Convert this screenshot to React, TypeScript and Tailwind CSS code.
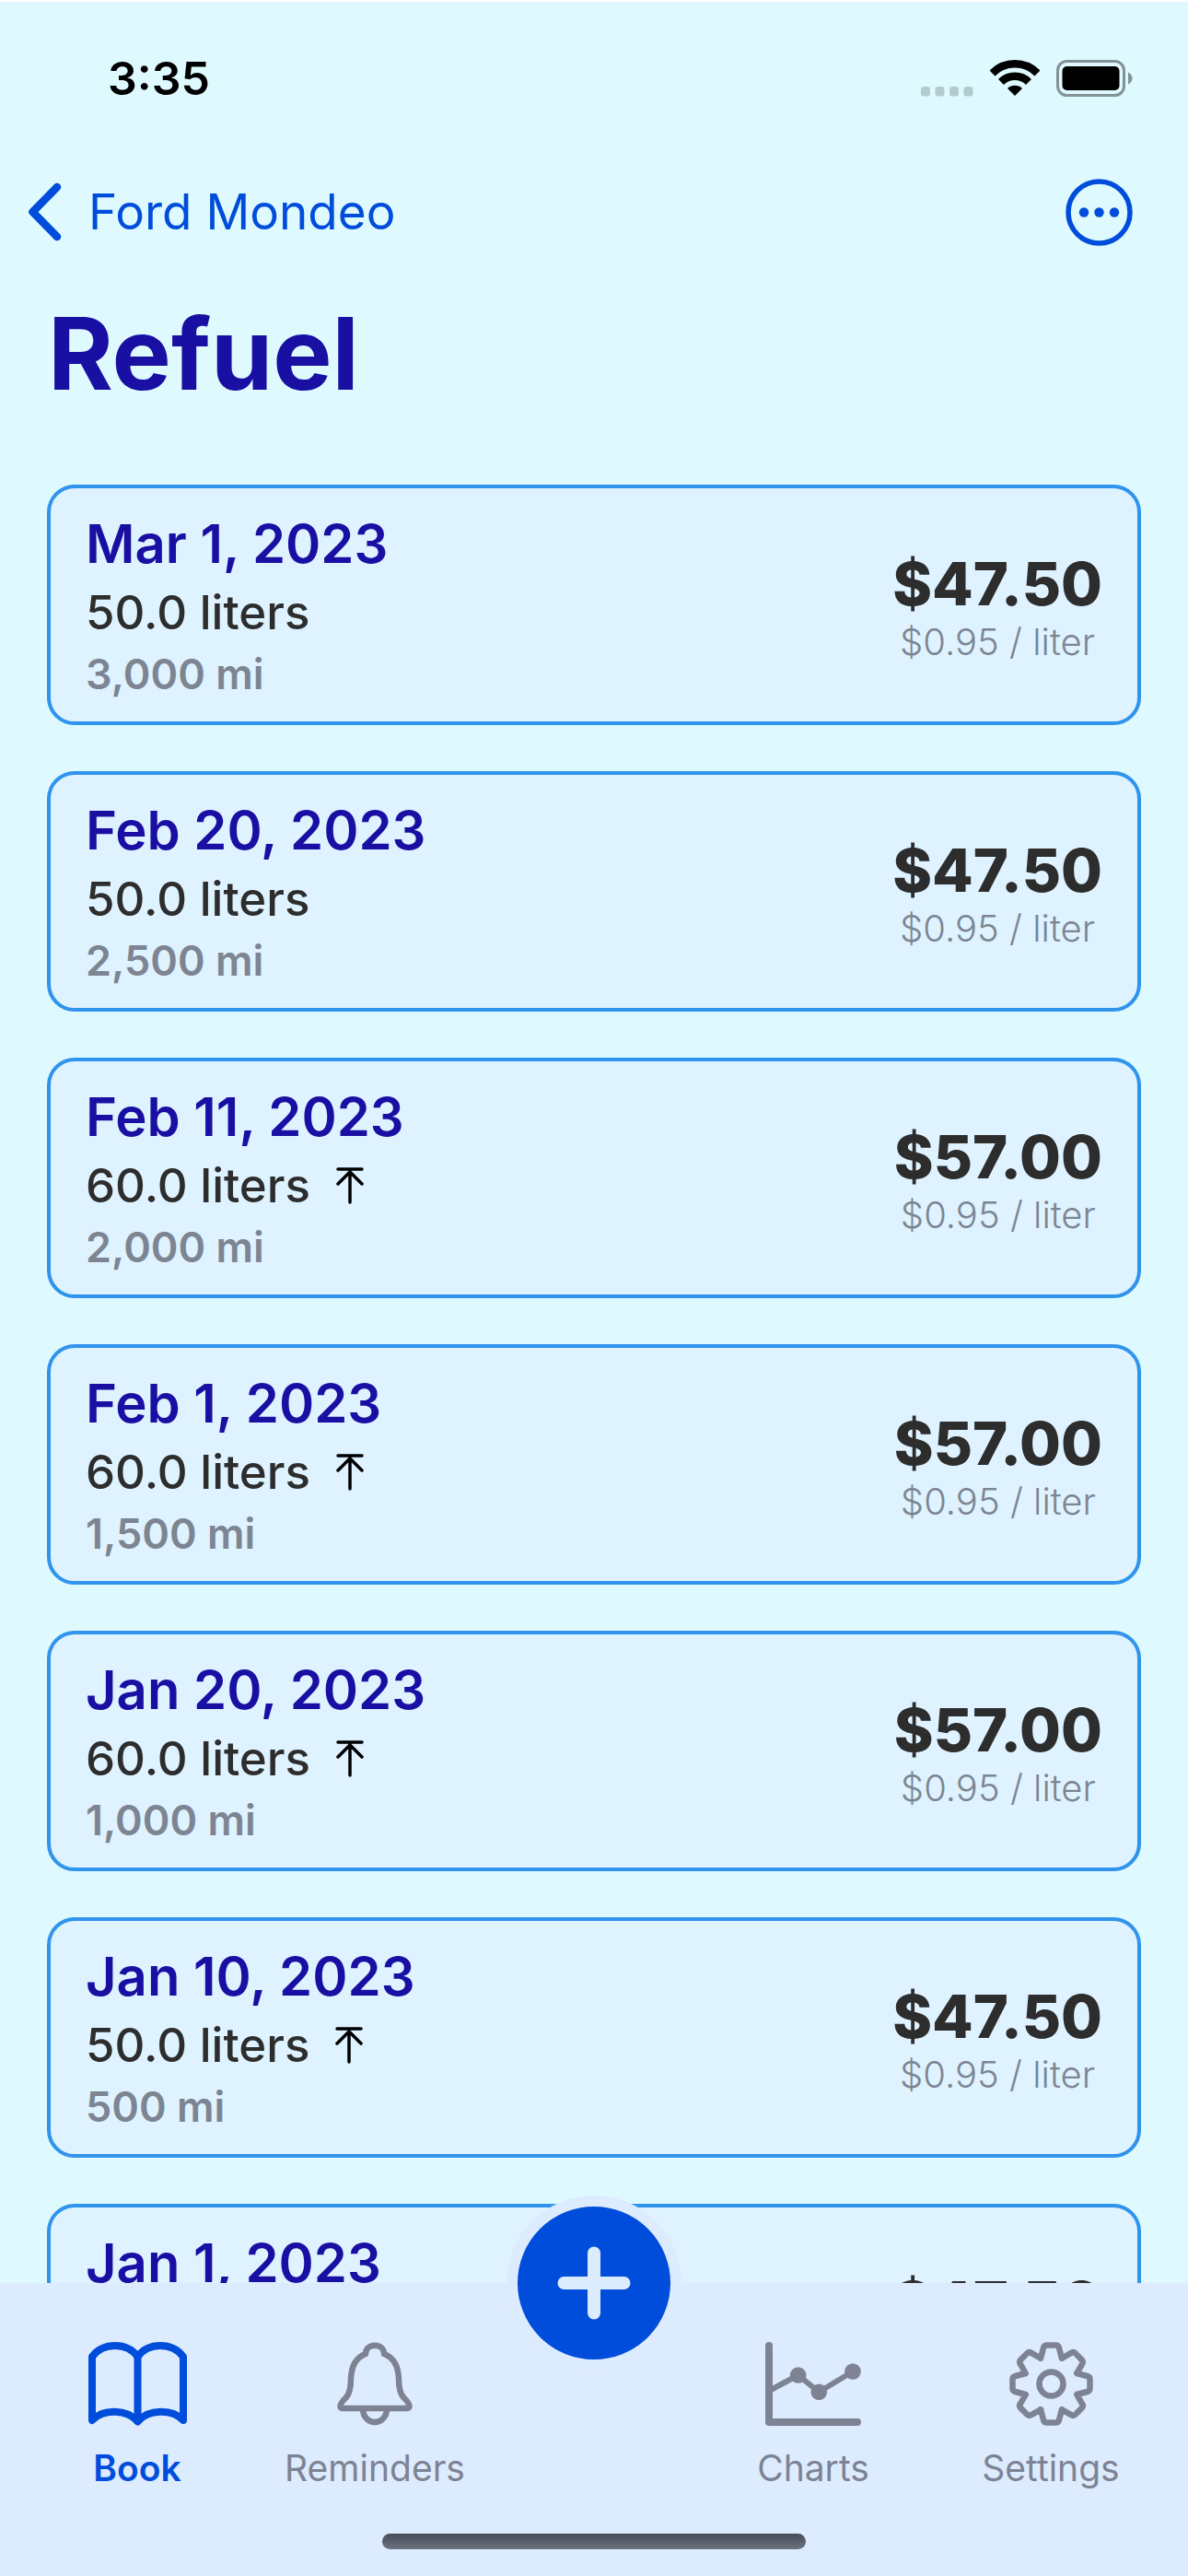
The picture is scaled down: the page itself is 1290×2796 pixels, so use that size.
import type { ReactNode } from "react";

type Entry = {
  date: string;
  volume: string;
  odometer: string;
  price: string;
  full?: boolean;
};

const entries: Entry[] = [
  { date: "Mar 1, 2023", volume: "50.0 liters", odometer: "3,000 mi", price: "$47.50" },
  { date: "Feb 20, 2023", volume: "50.0 liters", odometer: "2,500 mi", price: "$47.50" },
  { date: "Feb 11, 2023", volume: "60.0 liters", odometer: "2,000 mi", price: "$57.00", full: true },
  { date: "Feb 1, 2023", volume: "60.0 liters", odometer: "1,500 mi", price: "$57.00", full: true },
  { date: "Jan 20, 2023", volume: "60.0 liters", odometer: "1,000 mi", price: "$57.00", full: true },
  { date: "Jan 10, 2023", volume: "50.0 liters", odometer: "500 mi", price: "$47.50", full: true },
  { date: "Jan 1, 2023", volume: "50.0 liters", odometer: "0 mi", price: "$47.50" },
];

// One tooth pointing up, repeated every 45 degrees around the origin.
function gearPath() {
  const d: string[] = [];
  for (let i = 0; i < 8; i++) {
    const a = (i * Math.PI) / 4;
    const p = (x: number, y: number) =>
      `${(x * Math.cos(a) - y * Math.sin(a)).toFixed(2)} ${(x * Math.sin(a) + y * Math.cos(a)).toFixed(2)}`;
    d.push(
      `${i === 0 ? "M" : "L"}${p(-11.5, -27.7)} L${p(-8.5, -39)} Q${p(-7.8, -42)} ${p(-5, -42)} L${p(5, -42)} Q${p(7.8, -42)} ${p(8.5, -39)} L${p(11.5, -27.7)}`,
    );
  }
  return `${d.join(" ")} Z`;
}

function BookIcon() {
  return (
    <svg width="107" height="91" viewBox="0 0 107 91" fill="none" stroke="currentColor" strokeWidth="8" strokeLinecap="round" strokeLinejoin="round" aria-hidden>
      <path d="M4 16C16 0 42 0 53.5 16C65 0 91 0 103 16V85C91 72.500 65 72.500 53.500 86.500C42 72.500 16 72.500 4 85Z" />
      <path d="M53.500 16V86" />
    </svg>
  );
}

function BellIcon() {
  return (
    <svg width="82" height="91" viewBox="0 0 82 91" fill="none" stroke="currentColor" strokeWidth="6.500" strokeLinejoin="round" aria-hidden>
      <path d="M31 13C31 .5 51 .5 51 13C62 17 66.500 27 67 40C67 50 68.500 56 72 60C76 64 78.500 67 78.500 69.500Q78.500 72 75.500 72H6.500Q3.500 72 3.500 69.500C3.500 67 6 64 10 60C13.500 56 15 50 15 40C15.500 27 20 17 31 13Z" />
      <path d="M28 72C28 92 54 92 54 72" />
    </svg>
  );
}

function ChartIcon() {
  return (
    <svg width="104" height="91" viewBox="0 0 104 91" fill="none" stroke="currentColor" strokeLinecap="round" strokeLinejoin="round" aria-hidden>
      <path d="M4 4V87H100" strokeWidth="8" />
      <path d="M6 52L35.700 36L58.300 54.300L95 32" strokeWidth="6" />
      <g fill="currentColor" stroke="none">
        <circle cx="35.700" cy="36" r="8.800" />
        <circle cx="58.300" cy="54.300" r="8.800" />
        <circle cx="95" cy="32" r="8.800" />
      </g>
    </svg>
  );
}

function GearIcon() {
  return (
    <svg width="91" height="91" viewBox="-45.500 -45.500 91 91" fill="none" stroke="currentColor" strokeWidth="6.500" strokeLinejoin="round" aria-hidden>
      <path d={gearPath()} />
      <circle r="13" />
    </svg>
  );
}

function FullTankIcon() {
  return (
    <svg width="30" height="40" viewBox="0 0 30 40" fill="none" stroke="black" strokeWidth="3.500" strokeLinecap="round" strokeLinejoin="round" role="img" aria-label="Full tank">
      <path d="M2 2H28M15 5V38M2 18L15 5L28 18" />
    </svg>
  );
}

function StatusBar() {
  return (
    <div className="flex h-[168px] items-center justify-between border-t-2 border-white pr-[60px] pl-[117px]">
      <span className="text-[50px] font-semibold text-black">3:35</span>
      <div className="flex items-center">
        <svg width="57" height="40" viewBox="0 0 57 40" fill="#b3cbcf" aria-hidden>
          <rect x="0" y="29" width="10" height="10.500" rx="3" />
          <rect x="15.500" y="29" width="10" height="10.500" rx="3" />
          <rect x="31" y="29" width="10" height="10.500" rx="3" />
          <rect x="46.500" y="29" width="10" height="10.500" rx="3" />
        </svg>
        <svg className="ml-[18px]" width="54" height="40" viewBox="0 0 54 40" fill="none" stroke="black" strokeWidth="8.500" aria-hidden>
          <path d="M2.500 14.500A34.700 34.700 0 0 1 51.500 14.500" />
          <path d="M12 24A21.300 21.300 0 0 1 42 24" />
          <path d="M27 39L19 31A11.300 11.300 0 0 1 35 31Z" fill="black" stroke="none" />
        </svg>
        <svg className="ml-[18px]" width="83" height="40" viewBox="0 0 83 40" aria-hidden>
          <rect x="1.500" y="1.500" width="72" height="37" rx="10" fill="none" stroke="#829397" strokeWidth="3" />
          <rect x="6.500" y="7" width="62" height="26" rx="5" />
          <path d="M78 13.500C84 16 84 24 78 26.500Z" fill="#829397" />
        </svg>
      </div>
    </div>
  );
}

function EntryCard({ entry }: { entry: Entry }) {
  return (
    <li className="flex items-center justify-between rounded-[30px] border-4 border-[#3093ec] bg-[#def3ff] px-[38px] py-[23px]">
      <div>
        <h2 className="text-[58px] leading-[74px] font-semibold text-[#1a0fa3]">{entry.date}</h2>
        <p className="flex items-center gap-[28px] text-[51px] leading-[76px] font-medium text-[#2d2d2d]">
          {entry.volume}
          {entry.full && <FullTankIcon />}
        </p>
        <p className="text-[45px] leading-[57px] font-semibold text-[#7d8592]">{entry.odometer}</p>
      </div>
      <div className="text-center">
        <p className="text-[65px] leading-[80px] font-extrabold text-[#2d2d2d]">{entry.price}</p>
        <p className="text-[40px] leading-[46px] font-light text-[#7d8592]">$0.95 / liter</p>
      </div>
    </li>
  );
}

function Tab({ label, icon, active }: { label: string; icon: ReactNode; active?: boolean }) {
  return (
    <a
      href={`#${label.toLowerCase()}`}
      aria-current={active ? "page" : undefined}
      className={
        active
          ? "flex flex-1 flex-col items-center gap-[22px] font-semibold text-[#004ddb]"
          : "flex flex-1 flex-col items-center gap-[22px] text-[#7d8393]"
      }
    >
      {icon}
      <span className="text-[39px] leading-[48px]">{label}</span>
    </a>
  );
}

export default function App() {
  return (
    <div className="flex h-screen flex-col overflow-hidden bg-[#dffaff] font-['Inter',sans-serif]">
      <StatusBar />
      <header>
        <div className="flex h-[124px] items-center justify-between pr-[60px] pl-[30px]">
          <a href="#cars" className="flex items-center gap-[29px] text-[53px] leading-[66px] text-[#004ddb]">
            <svg width="37" height="64" viewBox="0 0 37 64" fill="none" stroke="currentColor" strokeWidth="8.500" strokeLinecap="round" strokeLinejoin="round" aria-hidden>
              <path d="M32 5L5.500 32L32 59" />
            </svg>
            Ford Mondeo
          </a>
          <button type="button" aria-label="More options" className="text-[#004ddb]">
            <svg width="73" height="73" viewBox="0 0 73 73" fill="currentColor" aria-hidden>
              <circle cx="36.500" cy="36.500" r="33.500" fill="none" stroke="currentColor" strokeWidth="5.500" />
              <circle cx="20" cy="36.500" r="5.200" />
              <circle cx="36.500" cy="36.500" r="5.200" />
              <circle cx="53" cy="36.500" r="5.200" />
            </svg>
          </button>
        </div>
        <h1 className="px-[52px] pt-6 pb-[74px] text-[108px] leading-[136px] font-bold text-[#1a0fa3]">
          Refuel
        </h1>
      </header>

      <main className="min-h-0 flex-1 overflow-hidden px-[51px]">
        <ul className="flex flex-col gap-[50px]">
          {entries.map((entry) => (
            <EntryCard key={entry.date} entry={entry} />
          ))}
        </ul>
      </main>

      <nav className="relative bg-[#ddebff] pt-[64px] pb-[29px]">
        <div className="flex px-[20px]">
          <Tab label="Book" icon={<BookIcon />} active />
          <Tab label="Reminders" icon={<BellIcon />} />
          <div className="w-[218px]" />
          <Tab label="Charts" icon={<ChartIcon />} />
          <Tab label="Settings" icon={<GearIcon />} />
        </div>
        <button
          type="button"
          aria-label="Add refuel"
          className="absolute top-0 left-1/2 flex size-[190px] -translate-x-1/2 -translate-y-1/2 items-center justify-center rounded-full border-12 border-[#ddebff] bg-[#004ddb] text-[#ddebff]"
        >
          <svg width="80" height="80" viewBox="0 0 80 80" stroke="currentColor" strokeWidth="14" strokeLinecap="round" aria-hidden>
            <path d="M40 7.500V72.500M7.500 40H72.500" />
          </svg>
        </button>
        <div className="mx-auto mt-[47px] h-[17px] w-[460px] rounded-full bg-linear-to-b from-[#484c58] to-[#6c727e]" />
      </nav>
    </div>
  );
}
